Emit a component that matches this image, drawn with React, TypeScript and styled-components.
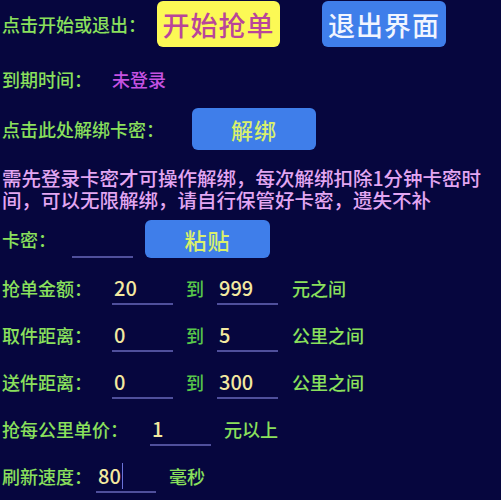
import styled, { createGlobalStyle } from 'styled-components';

const GlobalStyle = createGlobalStyle`
  html, body {
    margin: 0;
    padding: 0;
    background: #06063e;
  }
  body {
    font-family: "Noto Sans CJK SC", "Noto Sans", sans-serif;
    font-weight: 500;
  }
`;

const Page = styled.div`
  width: 501px;
  height: 500px;
  overflow: hidden;
  background: #06063e;
  padding: 1px 0 0 2px;
  box-sizing: border-box;
  display: flex;
  flex-direction: column;
`;

const Row = styled.div<{ $mt?: number; $h?: number }>`
  display: flex;
  align-items: center;
  height: ${p => p.$h ?? 34}px;
  margin-top: ${p => p.$mt ?? 13}px;
`;

const Label = styled.span<{ $gap?: number }>`
  color: #8ae05c;
  font-size: 18px;
  line-height: 1;
  white-space: nowrap;
  margin-right: ${p => p.$gap ?? 0}px;
`;

const Status = styled.span`
  color: #c552e2;
  font-size: 18px;
  line-height: 1;
`;

const Button = styled.div<{ $variant: 'yellow' | 'blue'; $w: number; $h: number; $size: number; $mr?: number }>`
  width: ${p => p.$w}px;
  height: ${p => p.$h}px;
  margin-right: ${p => p.$mr ?? 0}px;
  border-radius: 6px;
  display: flex;
  align-items: center;
  justify-content: center;
  font-size: ${p => p.$size}px;
  letter-spacing: 1px;
  background: ${p => (p.$variant === 'yellow' ? '#fcf955' : '#3f7eea')};
  color: ${p => (p.$variant === 'yellow' ? '#b9459a' : '#f2f5ff')};
  flex-shrink: 0;
`;

const SmallButtonText = styled.span`
  color: #d9f06c;
`;

const Notice = styled.p`
  margin: 17px 0 0 0;
  color: #e3a6f2;
  font-size: 19.5px;
  line-height: 22px;
  width: 500px;
`;

const Field = styled.div<{ $w?: number; $mr?: number }>`
  width: ${p => p.$w ?? 61}px;
  height: 100%;
  margin-right: ${p => p.$mr ?? 13}px;
  box-sizing: border-box;
  border-bottom: 2px solid #4f4f9c;
  display: flex;
  align-items: center;
  padding: 2px 0 0 2px;
  color: #f3e9a0;
  font-size: 20px;
  line-height: 1;
  flex-shrink: 0;
`;

const Caret = styled.span`
  display: inline-block;
  width: 1.5px;
  height: 26px;
  margin-left: 1px;
  background: #6b72d8;
`;

const Connector = styled(Label)`
  color: #58c84a;
  margin-right: 13px;
`;

export default function App() {
  return (
    <>
      <GlobalStyle />
      <Page>
        <Row $mt={0} $h={46}>
          <Label $gap={11}>点击开始或退出：</Label>
          <Button $variant="yellow" $w={123} $h={46} $size={27} $mr={42}>开始抢单</Button>
          <Button $variant="blue" $w={124} $h={46} $size={27}>退出界面</Button>
        </Row>

        <Row $mt={14} $h={36}>
          <Label $gap={20}>到期时间：</Label>
          <Status>未登录</Status>
        </Row>

        <Row $mt={11} $h={42}>
          <Label $gap={28}>点击此处解绑卡密：</Label>
          <Button $variant="blue" $w={124} $h={42} $size={22}>
            <SmallButtonText>解绑</SmallButtonText>
          </Button>
        </Row>

        <Notice>
          需先登录卡密才可操作解绑，每次解绑扣除1分钟卡密时间，可以无限解绑，请自行保管好卡密，遗失不补
        </Notice>

        <Row $mt={9} $h={38}>
          <Label $gap={16}>卡密：</Label>
          <Field $w={61} $mr={12} />
          <Button $variant="blue" $w={125} $h={38} $size={22}>
            <SmallButtonText>粘贴</SmallButtonText>
          </Button>
        </Row>

        <Row>
          <Label $gap={20}>抢单金额：</Label>
          <Field>20</Field>
          <Connector>到</Connector>
          <Field $mr={14}>999</Field>
          <Label>元之间</Label>
        </Row>

        <Row>
          <Label $gap={20}>取件距离：</Label>
          <Field>0</Field>
          <Connector>到</Connector>
          <Field $mr={14}>5</Field>
          <Label>公里之间</Label>
        </Row>

        <Row>
          <Label $gap={20}>送件距离：</Label>
          <Field>0</Field>
          <Connector>到</Connector>
          <Field $mr={14}>300</Field>
          <Label>公里之间</Label>
        </Row>

        <Row>
          <Label $gap={22}>抢每公里单价：</Label>
          <Field>1</Field>
          <Label>元以上</Label>
        </Row>

        <Row>
          <Label $gap={4}>刷新速度：</Label>
          <Field $w={60}>
            80
            <Caret />
          </Field>
          <Label>毫秒</Label>
        </Row>
      </Page>
    </>
  );
}
